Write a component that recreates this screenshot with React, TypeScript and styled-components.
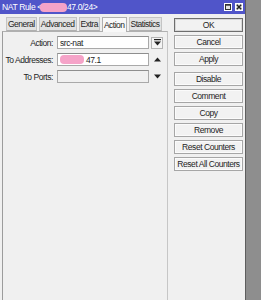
import React from "react";
import styled, { createGlobalStyle } from "styled-components";

const Global = createGlobalStyle`
  html, body { margin: 0; padding: 0; background: #8e8e8e; }
  body { font-family: "Liberation Sans", Arial, sans-serif; }
  * { box-sizing: border-box; }
`;

const Screen = styled.div`
  width: 261px;
  height: 300px;
  overflow: hidden;
  display: flex;
  background: #8e8e8e;
`;

const Window = styled.div`
  width: 246px;
  height: 300px;
  background: #f0f0f0;
  border-right: 1px solid #5e5e5e;
  display: flex;
  flex-direction: column;
`;

const TitleBar = styled.div`
  height: 14px;
  flex: none;
  background: #5055c9;
  display: flex;
  align-items: center;
  padding: 0 2px 0 2px;
  color: #ffffff;
  font-size: 8.5px;
  letter-spacing: -0.35px;
`;

const TitleText = styled.div`
  flex: 1;
  display: flex;
  align-items: center;
  white-space: nowrap;
`;

const Blur = styled.span<{ $w: number }>`
  display: inline-block;
  width: ${(p) => p.$w}px;
  height: 9px;
  background: #f5a3c8;
  border-radius: 4px;
  filter: blur(0.6px);
`;

const TitleButtons = styled.div`
  display: flex;
  gap: 3px;
`;

const TitleBtn = styled.div`
  width: 8px;
  height: 8px;
  background: #e4e4e4;
  border: 1px solid #ffffff;
  display: flex;
  align-items: center;
  justify-content: center;
`;

const Body = styled.div`
  flex: 1;
  display: flex;
`;

const LeftCol = styled.div`
  margin-left: 2px;
  width: 166px;
  display: flex;
  flex-direction: column;
  padding-top: 3px;
`;

const Tabs = styled.div`
  display: flex;
  align-items: flex-end;
  gap: 2px;
  padding-left: 4px;
  height: 14px;
  position: relative;
  z-index: 1;
`;

const Tab = styled.div<{ $active?: boolean }>`
  height: ${(p) => (p.$active ? 15 : 14)}px;
  margin-bottom: ${(p) => (p.$active ? -1 : 0)}px;
  padding: 0 1px;
  display: flex;
  align-items: center;
  font-size: 8.5px;
  letter-spacing: -0.5px;
  color: #1e1e1e;
  background: ${(p) => (p.$active ? "#f8f8f8" : "#e2e2e2")};
  border: 1px solid ${(p) => (p.$active ? "#b0b0b0" : "#c4c4c4")};
  border-bottom: ${(p) => (p.$active ? "none" : "1px solid #b0b0b0")};
`;

const Panel = styled.div`
  flex: 1;
  border-top: 1px solid #b0b0b0;
  border-left: 1px solid #9c9c9c;
  border-right: 1px solid #c6c6c6;
  padding-top: 4px;
  display: flex;
  flex-direction: column;
  gap: 4px;
`;

const Row = styled.div`
  display: flex;
  align-items: center;
  height: 13px;
`;

const Label = styled.div`
  width: 50px;
  margin-right: 4px;
  text-align: right;
  font-size: 8.5px;
  letter-spacing: -0.45px;
  color: #1e1e1e;
  white-space: nowrap;
`;

const Field = styled.div<{ $disabled?: boolean }>`
  width: 92px;
  height: 13px;
  background: ${(p) => (p.$disabled ? "#f0f0f0" : "#ffffff")};
  border: 1px solid #a9a9a9;
  border-top-color: #8e8e8e;
  display: flex;
  align-items: center;
  padding-left: 2px;
  font-size: 8.5px;
  letter-spacing: -0.45px;
  color: #1e1e1e;
  white-space: nowrap;
`;

const Trail = styled.div<{ $boxed?: boolean }>`
  width: 12px;
  height: 12px;
  margin-left: 2px;
  display: flex;
  align-items: center;
  justify-content: center;
  ${(p) =>
    p.$boxed
      ? "border: 1px solid #b4b4b4; background: #f4f4f4;"
      : ""}
`;

const RightCol = styled.div`
  flex: 1;
  padding: 4px 2px 0 6px;
  display: flex;
  flex-direction: column;
  gap: 3px;
`;

const Button = styled.div<{ $default?: boolean; $sep?: boolean }>`
  height: 14px;
  width: 69px;
  margin-top: ${(p) => (p.$sep ? 3 : 0)}px;
  display: flex;
  align-items: center;
  justify-content: center;
  background: #f2f2f2;
  border: 1px solid ${(p) => (p.$default ? "#6e6e6e" : "#a6a6a6")};
  box-shadow: inset 0 0 0 1px ${(p) => (p.$default ? "#d8d8d8" : "#fbfbfb")};
  font-size: 8.5px;
  letter-spacing: -0.45px;
  color: #1e1e1e;
  white-space: nowrap;
`;

const DropIcon = () => (
  <svg width="7" height="7" viewBox="0 0 7 7">
    <rect x="0" y="0" width="7" height="1.2" fill="#222" />
    <polygon points="0,2.5 7,2.5 3.5,6.5" fill="#222" />
  </svg>
);

const Tri = ({ up }: { up?: boolean }) => (
  <svg width="7" height="5" viewBox="0 0 7 5">
    <polygon points={up ? "0,4.5 7,4.5 3.5,0.5" : "0,0.5 7,0.5 3.5,4.5"} fill="#222" />
  </svg>
);

export default function App() {
  return (
    <>
      <Global />
      <Screen>
        <Window>
          <TitleBar>
            <TitleText>
              NAT Rule &lt;<Blur $w={27} style={{ marginLeft: -2 }} />47.0/24&gt;
            </TitleText>
            <TitleButtons>
              <TitleBtn>
                <svg width="6" height="6" viewBox="0 0 6 6">
                  <rect x="0.5" y="0.5" width="5" height="5" fill="none" stroke="#333" strokeWidth="1" />
                  <rect x="0.5" y="0.5" width="5" height="1.2" fill="#333" />
                </svg>
              </TitleBtn>
              <TitleBtn>
                <svg width="6" height="6" viewBox="0 0 6 6">
                  <path d="M0.8 0.8 L5.2 5.2 M5.2 0.8 L0.8 5.2" stroke="#222" strokeWidth="1.5" />
                </svg>
              </TitleBtn>
            </TitleButtons>
          </TitleBar>
          <Body>
            <LeftCol>
              <Tabs>
                <Tab>General</Tab>
                <Tab>Advanced</Tab>
                <Tab>Extra</Tab>
                <Tab $active>Action</Tab>
                <Tab>Statistics</Tab>
              </Tabs>
              <Panel>
                <Row>
                  <Label>Action:</Label>
                  <Field>src-nat</Field>
                  <Trail $boxed>
                    <DropIcon />
                  </Trail>
                </Row>
                <Row>
                  <Label>To Addresses:</Label>
                  <Field>
                    <Blur $w={24} />
                    <span style={{ marginLeft: 2 }}>47.1</span>
                  </Field>
                  <Trail>
                    <Tri up />
                  </Trail>
                </Row>
                <Row>
                  <Label>To Ports:</Label>
                  <Field $disabled />
                  <Trail>
                    <Tri />
                  </Trail>
                </Row>
              </Panel>
            </LeftCol>
            <RightCol>
              <Button $default>OK</Button>
              <Button>Cancel</Button>
              <Button>Apply</Button>
              <Button $sep>Disable</Button>
              <Button>Comment</Button>
              <Button>Copy</Button>
              <Button>Remove</Button>
              <Button>Reset Counters</Button>
              <Button>Reset All Counters</Button>
            </RightCol>
          </Body>
        </Window>
      </Screen>
    </>
  );
}
